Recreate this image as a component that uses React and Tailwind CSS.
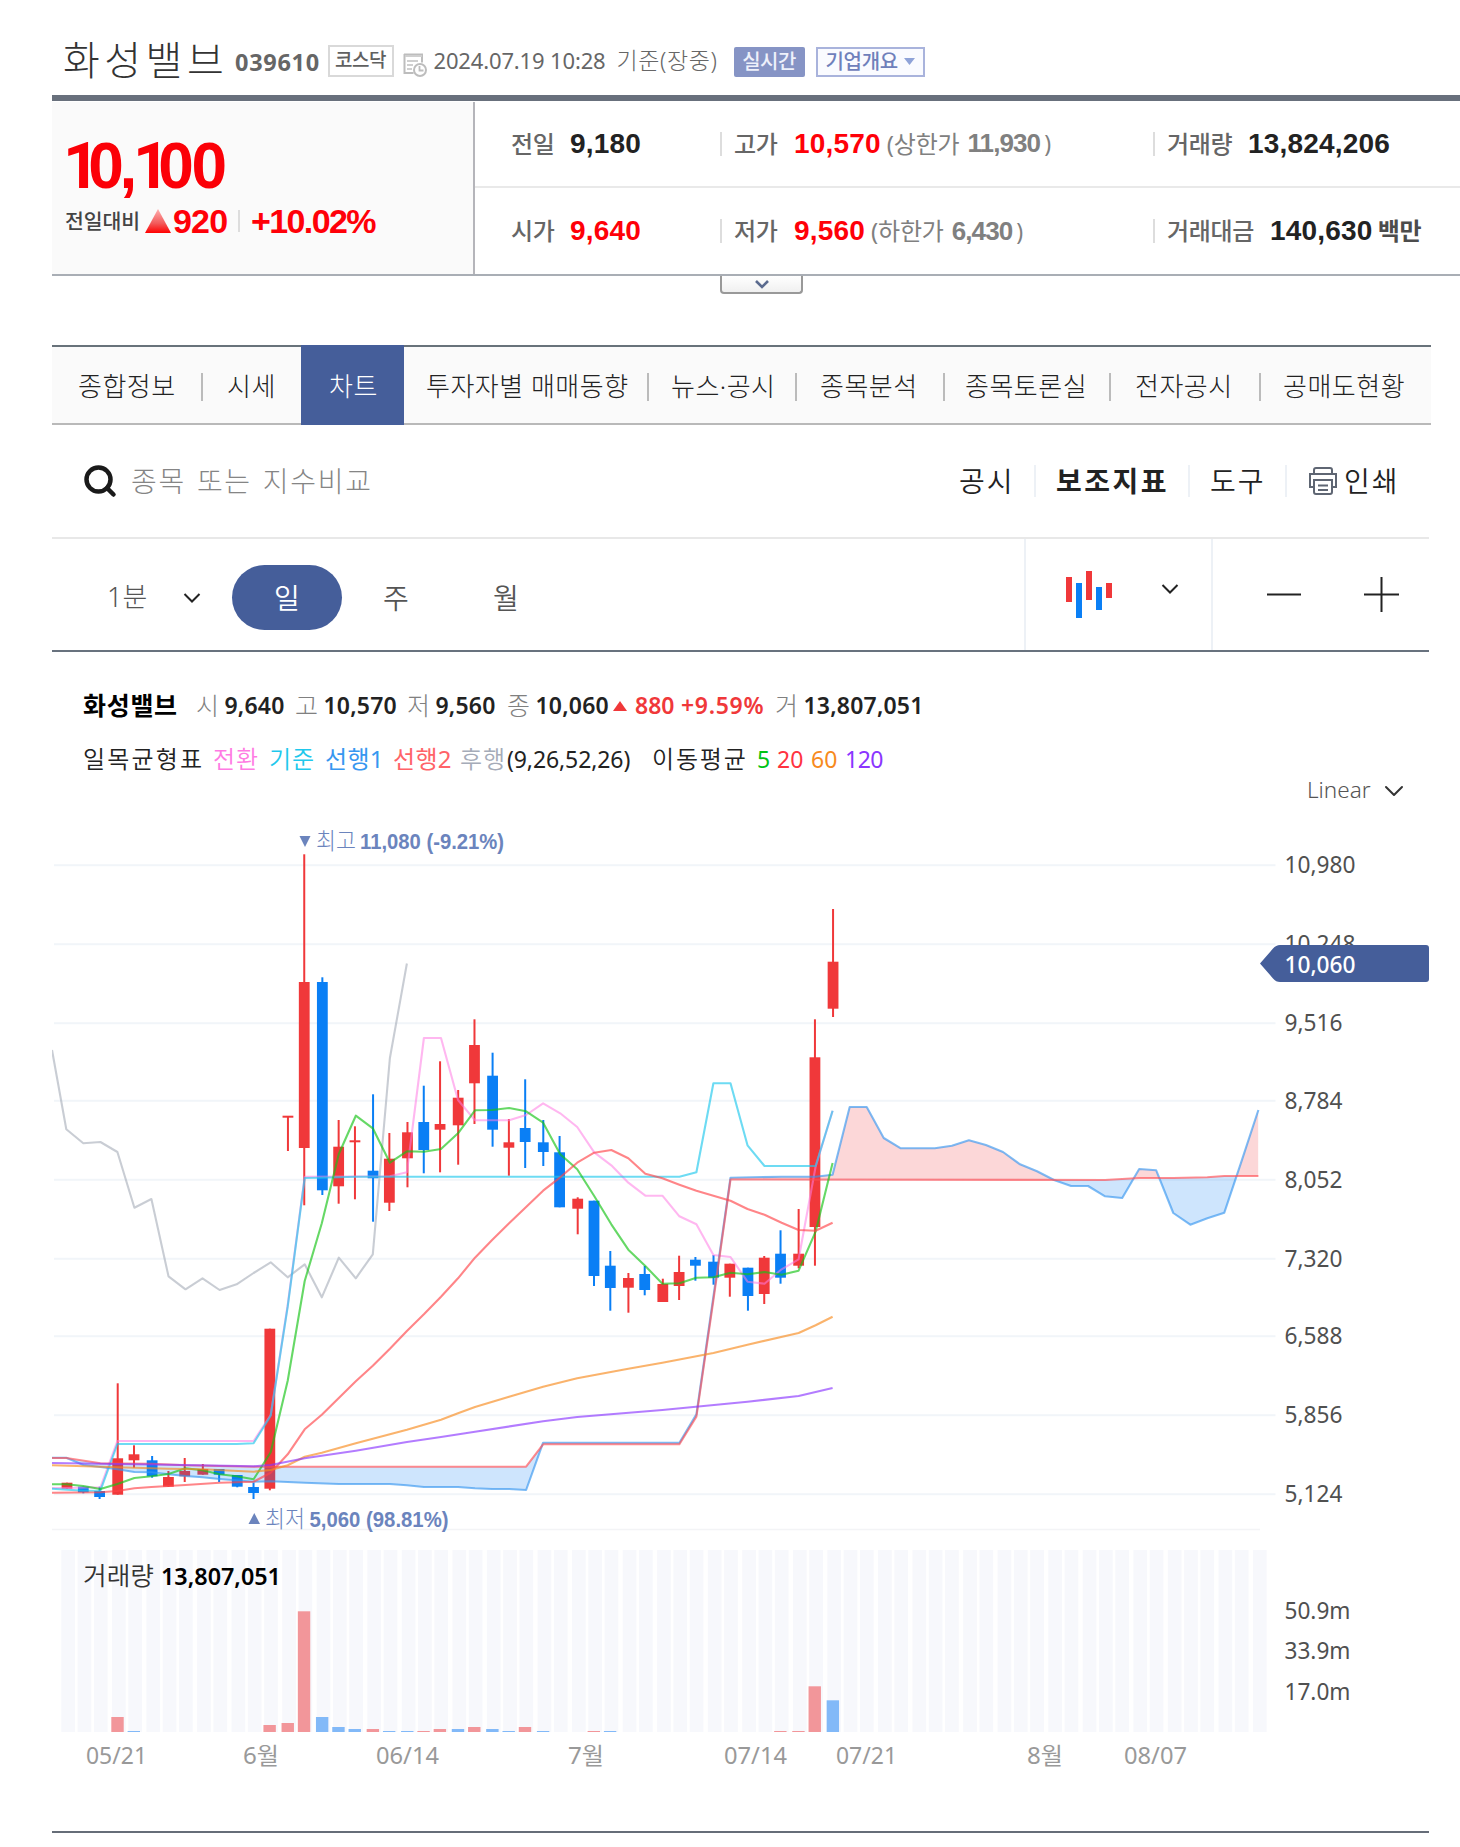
import React from "react";
import { ChevronDown, Search } from "lucide-react";

const RED = "#f0383a";
const BLUE = "#0a7ff5";

// [high, top, bottom, low, isUp]
const candles = [
  [1482.7, 1482.7, 1488.7, 1488.7, 1],
  [1486.7, 1486.7, 1492.3, 1493.3, 0],
  [1486.7, 1491, 1497, 1499, 0],
  [1383.3, 1458.3, 1494.7, 1494.7, 1],
  [1445.3, 1454.3, 1460.3, 1467.7, 1],
  [1456, 1460.3, 1476.3, 1477.7, 0],
  [1471, 1477, 1486.7, 1487, 1],
  [1458, 1471, 1476.3, 1482, 1],
  [1464, 1469, 1474.7, 1474.7, 1],
  [1469, 1469, 1474.7, 1482, 0],
  [1475, 1475, 1486.7, 1487.3, 0],
  [1482.7, 1487, 1493, 1499, 0],
  [1328.7, 1328.7, 1488.7, 1490.3, 1],
  [1116, 1115.7, 1117.7, 1151, 1],
  [854.3, 982, 1148, 1205.3, 1],
  [977.3, 982, 1190.3, 1195, 0],
  [1120, 1146.7, 1186.3, 1203.7, 1],
  [1126.3, 1140.3, 1142.3, 1199.3, 1],
  [1094.3, 1170.7, 1178.3, 1221.7, 0],
  [1133, 1158.7, 1202.7, 1211, 1],
  [1122, 1132.3, 1158.3, 1187.3, 1],
  [1085.7, 1122, 1150, 1173.3, 0],
  [1061.3, 1124, 1129.7, 1172.3, 1],
  [1090, 1097.7, 1125.3, 1164.7, 1],
  [1019.3, 1045, 1083.3, 1124, 1],
  [1052.7, 1075.7, 1129.7, 1146.7, 0],
  [1119, 1142.3, 1147.7, 1175.7, 1],
  [1079.3, 1128, 1142, 1168, 0],
  [1120, 1142.3, 1152, 1166, 0],
  [1136, 1152.3, 1207.3, 1207.3, 0],
  [1197.3, 1198.7, 1208.7, 1234.3, 1],
  [1200.7, 1200.7, 1276, 1286, 0],
  [1251, 1265.7, 1288, 1310.7, 0],
  [1273, 1278, 1287.7, 1312.7, 1],
  [1266, 1274, 1290, 1295.3, 0],
  [1278.7, 1284, 1302, 1302, 1],
  [1255.7, 1272, 1286, 1300, 1],
  [1257, 1259.7, 1265.7, 1280.7, 0],
  [1255, 1261.7, 1277.7, 1284.7, 0],
  [1263.7, 1263.7, 1277.7, 1296.7, 1],
  [1267.7, 1267.7, 1296, 1310.7, 0],
  [1256, 1257.7, 1294, 1304, 1],
  [1230.3, 1253.7, 1277.7, 1283.7, 0],
  [1209, 1253.7, 1265.7, 1268.3, 1],
  [1019.3, 1057.3, 1227, 1265.7, 1],
  [909, 961.7, 1008.7, 1017, 1],
];

// [day, y] points
const conversion = [[-0.84, 1488], [0, 1488], [2, 1487.3], [3, 1441], [11, 1441], [12, 1415], [13, 1305], [14, 1176.7], [19, 1176.3], [20, 1172.3], [21, 1038], [22, 1038], [23, 1100], [24, 1120.3], [26, 1120.3], [27, 1115], [28, 1103.3], [29, 1113.3], [30, 1127], [31, 1152.3], [32, 1165.3], [33, 1182.7], [34, 1195.7], [35, 1195.7], [36, 1216.3], [37, 1224.3], [38, 1255], [39, 1257], [40, 1281.7], [41, 1283.7], [42, 1269.3], [43, 1259.3], [44, 1166.7], [45, 1110.7]];
const base = [[-0.84, 1488.7], [1, 1490.7], [2, 1490.7], [3, 1444], [10, 1444], [11, 1443.3], [12, 1415.7], [13, 1306.7], [14, 1178], [15, 1177.7], [17, 1176.7], [36, 1176.7], [37, 1172.3], [38, 1083.3], [39, 1083.3], [40, 1145.3], [41, 1166], [44, 1166], [45, 1110.7]];
const lagging = [[-0.84, 1050], [0, 1129.3], [1, 1143.3], [2, 1142], [3, 1152], [4, 1207.7], [5, 1199], [6, 1276.3], [7, 1289.3], [8, 1278.3], [9, 1290], [10, 1284.3], [11, 1273], [12, 1262.3], [13, 1277.3], [14, 1264.3], [15, 1297.3], [16, 1257.7], [17, 1278.3], [18, 1254.3], [19, 1058], [20, 963.5]];
const spanA = [[-0.84, 1457.7], [0, 1457.7], [1, 1465], [2, 1467], [3, 1469.3], [4, 1472], [5, 1472.3], [6, 1474.3], [7, 1476], [8, 1477.3], [9, 1479], [11, 1481.7], [12, 1481.3], [14, 1482.7], [16, 1484], [19, 1484], [20, 1485.3], [21, 1487], [23, 1487], [24, 1488.3], [25, 1489], [26, 1489], [27, 1490], [28, 1442.7], [36, 1442.7], [37, 1414.3], [38, 1296.7], [39, 1177.7], [42, 1176.7], [44, 1176.7], [45, 1174.7], [46, 1107], [47, 1107], [48, 1138], [49, 1148.3], [51, 1148.3], [52, 1145.7], [53, 1140.3], [54, 1145], [55, 1152], [56, 1164.3], [57, 1171.3], [58, 1180], [59, 1186], [60, 1186], [61, 1196.3], [62, 1198], [63, 1169], [64, 1170.3], [65, 1213], [66, 1224.7], [67, 1218.3], [68, 1212.7], [69, 1161.7], [70, 1110]];
const spanB = [[-0.84, 1458], [0, 1458], [2, 1463.3], [5, 1463.7], [7, 1465.3], [11, 1466.7], [27, 1466.7], [28, 1444.3], [36, 1444.3], [37, 1416.7], [38, 1300], [39, 1179.5], [61, 1180], [63, 1178], [65, 1178], [67, 1177.3], [68, 1176], [70, 1176]];
const ma5 = [[-0.84, 1484.3], [0, 1484.3], [1, 1486], [2, 1489], [3, 1484], [4, 1478], [5, 1476.3], [6, 1474], [7, 1468.3], [8, 1470.3], [9, 1474.3], [10, 1476.3], [11, 1479.3], [12, 1452.3], [13, 1380.7], [14, 1281], [15, 1223.3], [16, 1154], [17, 1115.7], [18, 1128.3], [19, 1162.7], [20, 1151.3], [21, 1151.7], [22, 1149], [23, 1133.3], [24, 1110.3], [25, 1110], [26, 1108], [27, 1111.3], [28, 1122.7], [29, 1154.3], [30, 1169.3], [31, 1196], [32, 1224.3], [33, 1249.7], [34, 1266], [35, 1283.7], [36, 1283.3], [37, 1277.7], [38, 1277.3], [39, 1272.7], [40, 1274.3], [41, 1272], [42, 1274.7], [43, 1270.7], [44, 1231.7], [45, 1163]];
const ma20 = [[-0.84, 1492.7], [2, 1492.3], [3, 1491], [4, 1488.3], [5, 1487], [7, 1485], [9, 1482.7], [11, 1481.7], [12, 1472.7], [13, 1454.3], [14, 1429.3], [15, 1414.7], [16, 1398], [17, 1381.3], [18, 1365.7], [19, 1348.7], [20, 1331], [21, 1314.3], [22, 1296.7], [23, 1278.3], [24, 1257.7], [25, 1240], [26, 1223.3], [27, 1207], [28, 1190.7], [29, 1177.3], [30, 1162.7], [31, 1152.7], [32, 1150], [33, 1158.3], [34, 1173.7], [35, 1178.3], [36, 1184.7], [37, 1190.7], [38, 1195.7], [39, 1200.7], [40, 1209], [41, 1214.7], [42, 1222.7], [43, 1230], [44, 1230.7], [45, 1222.7]];
const ma60 = [[-0.84, 1465.3], [3, 1467.3], [6, 1468.7], [8, 1469.3], [11, 1471.7], [12, 1470], [13, 1465.3], [14, 1456.7], [15, 1452.7], [17, 1443.3], [20, 1429.7], [22, 1419.7], [23, 1413.3], [24, 1407], [26, 1396.7], [28, 1386.7], [30, 1378.3], [33, 1368.7], [35, 1362.7], [38, 1353], [40, 1344.7], [43, 1333], [44, 1325.3], [45, 1316.7]];
const ma120 = [[-0.84, 1463], [3, 1464], [7, 1465], [11, 1466.3], [12, 1465], [14, 1458.3], [17, 1450.7], [20, 1442], [22, 1437], [24, 1431.7], [28, 1421.3], [30, 1417], [35, 1410], [40, 1401.7], [43, 1396], [45, 1388]];

// [day, top, isUp]
const volumes = [
  [3, 1717, 1], [4, 1731, 0], [12, 1725, 1], [13, 1723, 1], [14, 1611.3, 1], [15, 1717, 0],
  [16, 1727, 0], [17, 1729, 0], [18, 1729, 1], [19, 1731, 0], [20, 1731, 0], [21, 1731, 1],
  [22, 1729, 1], [23, 1729, 0], [24, 1727, 1], [25, 1729, 0], [26, 1731, 0], [27, 1727, 1],
  [28, 1731, 0], [31, 1731, 1], [32, 1731, 0], [42, 1731, 1], [43, 1731, 1], [44, 1686.3, 1], [45, 1700.3, 0],
];

const prices = [
  [865, "10,980", 71], [944, "10,248", 71], [1023, "9,516", 58], [1100.5, "8,784", 58], [1179.5, "8,052", 58],
  [1258.5, "7,320", 58], [1336, "6,588", 58], [1415, "5,856", 58], [1494, "5,124", 58],
];

const dates = [
  [86, "05/21", 61], [243, "6월", 36], [376, "06/14", 63], [568, "7월", 36],
  [724, "07/14", 63], [836, "07/21", 61], [1027, "8월", 36], [1124, "08/07", 63],
];

const barX = (i) => 67 + 1.811 * Math.floor(9.4 * i + 0.001);
const lineX = (i) => 66.3 + 17.03 * i;
const toPoints = (pts) => pts.map(([i, y]) => `${lineX(i).toFixed(1)},${y}`).join(" ");

const Line = ({ pts, color, opacity = 0.65 }) => (
  <polyline points={toPoints(pts)} fill="none" stroke={color} strokeOpacity={opacity} strokeWidth="2.1" strokeLinejoin="round" />
);

const Label = ({ x, y, w, children, ...rest }) => (
  <text x={x} y={y} textLength={w} lengthAdjust="spacingAndGlyphs" {...rest}>
    {children}
  </text>
);

const Chart = () => {
  const cloud = toPoints(spanA) + " " + toPoints([...spanB].reverse());
  const edge = toPoints(spanB);

  return (
    <svg viewBox="52 820 1408 960" className="ml-[52px] block h-[960px] w-[1408px] text-[23px]">
      <defs>
        <clipPath id="above"><polygon points={`52,820 ${edge} 1259,820`} /></clipPath>
        <clipPath id="below"><polygon points={`52,1540 ${edge} 1259,1540`} /></clipPath>
      </defs>

      {/* Grid */}
      {prices.map(([y]) => (
        <line key={y} x1="54" x2="1275.5" y1={y + 0.3} y2={y + 0.3} stroke="#f1f5f9" strokeWidth="2" />
      ))}
      <line x1="52" x2="1260" y1="1529.5" y2="1529.5" stroke="#f3f4f6" strokeWidth="1.5" />

      {/* Candles */}
      {candles.map(([high, top, bottom, low, up], i) => (
        <g key={i} fill={up ? RED : BLUE}>
          <rect x={barX(i) - 1} y={high} width="2" height={low - high} />
          <rect x={barX(i) - 5.4} y={top} width="10.8" height={bottom - top} />
        </g>
      ))}

      {/* Cloud */}
      <polygon points={cloud} fill={RED} fillOpacity="0.2" clipPath="url(#above)" />
      <polygon points={cloud} fill={BLUE} fillOpacity="0.2" clipPath="url(#below)" />
      <Line pts={lagging} color="#a5abb8" opacity={0.6} />
      <Line pts={conversion} color="#ff7be3" opacity={0.55} />
      <Line pts={base} color="#1fc8ec" />
      <Line pts={spanA} color="#3797f0" />
      <Line pts={spanB} color="#ff4f54" />
      <Line pts={ma5} color="#14c314" />
      <Line pts={ma20} color="#ff4448" />
      <Line pts={ma60} color="#f78a1d" />
      <Line pts={ma120} color="#8b35ff" />

      {/* High / low markers */}
      <g fill="#6b84bd">
        <path d="M299.5 836h11l-5.5 11z" />
        <Label x="316" y="848.500" w="40" className="font-light">최고</Label>
        <Label x="360" y="849" w="144" className="font-bold text-[22px] font-['Liberation_Sans',sans-serif]">11,080 (-9.21%)</Label>
        <path d="M248.500 1524h11.500l-5.700-11z" />
        <Label x="265" y="1526.500" w="40" className="font-light">최저</Label>
        <Label x="309.500" y="1526.500" w="139" className="font-bold text-[22px] font-['Liberation_Sans',sans-serif]">5,060 (98.81%)</Label>
      </g>

      {/* Price axis */}
      {prices.map(([y, text, w]) => (
        <Label key={text} x="1284.500" y={y + 8} w={w} fill="#505050">{text}</Label>
      ))}
      <path d="M1260 963.500l13-15q3-3.500 7-3.500h146q3 0 3 3v31q0 3-3 3h-146q-4 0-7-3.500z" fill="#455e9a" />
      <Label x="1284.500" y="973" w="71" fill="#fff" className="font-medium">10,060</Label>

      {/* Volume */}
      {Array.from({ length: 71 }, (_, i) => (
        <rect key={i} x={barX(i) - 5.7} y="1550" width="13.700" height="182" fill="#f7f8fc" />
      ))}
      {volumes.map(([i, y, up]) => (
        <rect key={i} x={barX(i) - 6.4} y={y} width="12.400" height={1732 - y} fill={up ? "#f2969a" : "#82b9f8"} />
      ))}
      <Label x="83" y="1585" w="71" fill="#333" className="font-[350] text-[25px]">거래량</Label>
      <Label x="161" y="1584.500" w="120" fill="#000" className="font-semibold">13,807,051</Label>
      {[[1618.5, "50.9m"], [1659, "33.9m"], [1700, "17.0m"]].map(([y, text]) => (
        <Label key={text} x="1284.500" y={y} w="66" fill="#505050">{text}</Label>
      ))}

      {/* Dates */}
      {dates.map(([x, text, w]) => (
        <Label key={text} x={x} y="1764" w={w} fill="#999">{text}</Label>
      ))}
    </svg>
  );
};

const Header = () => (
  <header className="flex h-[95px] pl-[63px] whitespace-nowrap">
    <h1 className="w-[172px] pt-[32px] text-[40px] leading-[56px] font-light tracking-[4.500px] text-[#333]">화성밸브</h1>
    <span className="w-[92.500px] pt-[47px] text-[23.500px] leading-[30px] font-bold tracking-[0.700px] text-[#666]">039610</span>
    <span className="mt-[45px] flex h-[32px] w-[66px] items-center justify-center border-2 border-[#d9d9d9] pb-px text-[19px] font-medium tracking-[-0.500px] text-[#606060]">코스닥</span>
    <svg viewBox="0 0 24 24" className="mt-[53px] ml-[9px] size-6" fill="none" stroke="#bdbdbd">
      <path d="M1 1.500h18v8M1.500 1v19h9" strokeWidth="2" />
      <path d="M2 3h17M4 8h11M4 12h6M4 16h5" strokeWidth="2.200" stroke="#cfcfcf" />
      <circle cx="17" cy="17" r="6" fill="#fff" strokeWidth="2" />
      <path d="M16.500 13v4.500h4" strokeWidth="1.800" />
    </svg>
    <span className="ml-[7px] w-[183px] pt-[45px] text-[22px] leading-[30px] tracking-[-0.150px] text-[#666]">2024.07.19 10:28</span>
    <span className="w-[117px] pt-[45px] text-[23px] leading-[30px] font-light tracking-[0.600px] text-[#666]">기준(장중)</span>
    <span className="mt-[47px] flex h-[30px] w-[71px] items-center justify-center rounded-[2px] bg-[#8694c5] pb-px text-[20px] font-medium tracking-[-0.500px] text-[#eef1fb]">실시간</span>
    <span className="mt-[47px] ml-[11px] flex h-[30px] w-[109px] items-center border-2 border-[#a9b3dc] bg-[#fafbff] pb-px pl-[8px] text-[20px] font-medium tracking-[-0.300px] text-[#6f80bb]">
      기업개요
      <svg viewBox="0 0 11 7" className="ml-[6px] h-[7px] w-[11px]"><path d="M0 0h11l-5.500 7z" fill="#8fa3d8" /></svg>
    </span>
  </header>
);

const Quote = ({ label, value, width, up, limit, limitValue, unit }) => (
  <div className="flex h-6 items-center whitespace-nowrap">
    <span className={`${width} text-[24px] font-medium tracking-[-0.300px] text-[#666]`}>{label}</span>
    <span className={`font-['Liberation_Sans',sans-serif] text-[28px] font-bold tracking-[0.200px] ${up ? "text-[#ff0008]" : "text-[#222]"}`}>{value}</span>
    {limit && (
      <span className="ml-[6px] flex items-center text-[#808080]">
        <span className="text-[24px] tracking-[-0.200px]">({limit}</span>
        <span className="ml-[8px] font-['Liberation_Sans',sans-serif] text-[26px] font-bold tracking-[-0.900px]">{limitValue}</span>
        <span className="ml-[4px] text-[23px]">)</span>
      </span>
    )}
    {unit && <span className="ml-[5px] text-[24px] font-bold tracking-[-0.300px] text-[#4c4c4c]">{unit}</span>}
  </div>
);

const One = () => <span className="font-['Roboto',sans-serif] tracking-[-11.500px]">1</span>;

const Summary = () => (
  <section className="ml-[52px] flex h-[181px] border-t-[6px] border-b-2 border-t-[#68707c] border-b-[#a9aeb5]">
    <div className="mt-px w-[423px] border-r-2 border-[#b5b5ba] bg-[#fafafa] pl-[12px] whitespace-nowrap">
      <div className="-ml-px h-[102px] pt-[29px] font-['Liberation_Sans',sans-serif] text-[64px] leading-[70px] font-bold tracking-[-2.300px] text-[#fb0007]">
        <One />
        <span className="tracking-[-4.300px]">0,</span>
        <One />
        00
      </div>
      <div className="flex h-[34px] items-center">
        <span className="w-[81px] pl-px text-[20.500px] font-medium tracking-[-0.100px] text-[#444]">전일대비</span>
        <svg viewBox="0 0 26 24" className="h-6 w-[26px]">
          <defs>
            <linearGradient id="up" x1="0" y1="0" x2="0" y2="1">
              <stop offset="0" stopColor="#ffb0b0" />
              <stop offset="0.600" stopColor="#f25a5a" />
              <stop offset="1" stopColor="#f00" />
            </linearGradient>
          </defs>
          <path d="M13 0l13 24H0z" fill="url(#up)" />
        </svg>
        <span className="ml-[2px] w-[65px] font-['Liberation_Sans',sans-serif] text-[34px] font-bold tracking-[-0.800px] text-[#ff0008]">920</span>
        <span className="h-[22px] w-0.5 bg-[#ddd]" />
        <span className="ml-[11px] font-['Liberation_Sans',sans-serif] text-[34px] font-bold tracking-[-1.600px] text-[#ff0008]">+10.02%</span>
      </div>
    </div>
    <div className="flex-1">
      <div className="flex h-[87px] items-center border-b-2 border-[#e9e9e9]">
        <div className="w-[245px] pl-[36px]"><Quote label="전일" value="9,180" width="w-[59px]" /></div>
        <div className="w-[433px] border-l-2 border-[#ddd] pl-[12px]"><Quote label="고가" value="10,570" width="w-[60px]" up limit="상한가" limitValue="11,930" /></div>
        <div className="border-l-2 border-[#ddd] pl-[12px]"><Quote label="거래량" value="13,824,206" width="w-[81px]" /></div>
      </div>
      <div className="flex h-[86px] items-center">
        <div className="w-[245px] pl-[36px]"><Quote label="시가" value="9,640" width="w-[59px]" up /></div>
        <div className="w-[433px] border-l-2 border-[#ddd] pl-[12px]"><Quote label="저가" value="9,560" width="w-[60px]" up limit="하한가" limitValue="6,430" /></div>
        <div className="border-l-2 border-[#ddd] pl-[12px]"><Quote label="거래대금" value="140,630" width="w-[103px]" unit="백만" /></div>
      </div>
    </div>
  </section>
);

const tabs = [
  ["종합정보", "w-[149px] pl-[26px]", false],
  ["시세", "w-[100px] pl-[26px]", true],
  ["차트", "w-[103px] pl-[28px]", false],
  ["투자자별 매매동향", "w-[243px] pl-[22px]", false],
  ["뉴스·공시", "w-[148px] pl-[24px]", true],
  ["종목분석", "w-[148px] pl-[25px]", true],
  ["종목토론실", "w-[166px] pl-[22px]", true],
  ["전자공시", "w-[150px] pl-[26px]", true],
  ["공매도현황", "w-[172px] pl-[24px]", true],
];

const Tabs = () => (
  <nav className="mt-[51px] ml-[52px] flex h-[80px] w-[1379px] bg-[#fafafa] text-[26px] leading-[78px] font-light tracking-[0.500px] whitespace-nowrap text-[#222]">
    {tabs.map(([name, size, sep]) =>
      name === "차트" ? (
        <a key={name} className={`${size} bg-[#455e9a] pt-[2px] text-white`}>{name}</a>
      ) : (
        <a key={name} className={`${size} relative h-[80px] border-t-2 border-b-2 border-t-[#68727a] border-b-[#b9b9b9]`}>
          {sep && <i className="absolute top-[26px] left-0 h-[28px] w-0.5 bg-[#bbb]" />}
          {name}
        </a>
      )
    )}
  </nav>
);

const Divider = () => <i className="h-8 w-0.5 bg-[#edf1f6]" />;

const SearchRow = () => (
  <div className="ml-[52px] flex h-[114px] w-[1377px] items-center border-b-2 border-[#e8e8e8] whitespace-nowrap text-[28px] font-[350] text-[#222]">
    <Search className="ml-[30px] size-[36px] text-[#1a1a1a]" strokeWidth={3} />
    <span className="ml-[13px] flex-1 font-light tracking-[1.700px] [word-spacing:2px] text-[#858585]">종목 또는 지수비교</span>
    <span className="w-[75px] tracking-[2px]">공시</span>
    <Divider />
    <span className="w-[152px] pl-[20px] font-bold tracking-[2.500px]">보조지표</span>
    <Divider />
    <span className="w-[95px] pl-[20px] tracking-[2px]">도구</span>
    <Divider />
    <svg viewBox="0 0 28 28" className="ml-[22px] size-7" fill="none" stroke="#5f6673" strokeWidth="2">
      <path d="M5 7V3q0-2 2-2h14q2 0 2 2v4M5 20H1V7h26v13h-4M5 13h18v12q0 2-2 2H7q-2 0-2-2zM9 18.500h10M9 23h10" />
    </svg>
    <span className="ml-[7px] w-[85px] tracking-[2px]">인쇄</span>
  </div>
);

const IntervalRow = () => (
  <div className="ml-[52px] flex h-[113px] w-[1377px] border-b-2 border-[#68727e] text-[28px] font-[350] text-[#555]">
    <div className="flex flex-1 items-center pt-[6px]">
      <span className="ml-[55px] w-[76px] text-[27px] font-light">1분</span>
      <svg viewBox="0 0 18 12" className="h-3 w-[18px]" fill="none" stroke="#222" strokeWidth="2"><path d="M1.500 2L9 9.500 16.500 2" /></svg>
      <span className="ml-[31px] flex h-[65px] w-[110px] items-center justify-center rounded-full bg-[#455e9a] text-white">일</span>
      <span className="ml-[41px] w-[110px]">주</span>
      <span>월</span>
    </div>
    <div className="flex w-[187px] border-l-2 border-[#edf1f6]">
      <svg viewBox="0 0 46 48" className="mt-[32px] ml-[40px] h-12 w-[46px]">
        <path d="M0 6h6v25H0zM20 0h6v29h-6zM40 12h6v15h-6z" fill={RED} />
        <path d="M10 12h6v35h-6zM30 16h6v23h-6z" fill={BLUE} />
      </svg>
      <svg viewBox="0 0 18 12" className="mt-[44px] ml-[49px] h-3 w-[18px]" fill="none" stroke="#222" strokeWidth="2"><path d="M1.500 2L9 9.500 16.500 2" /></svg>
    </div>
    <div className="flex w-[218px] border-l-2 border-[#edf1f6]">
      <svg viewBox="0 0 134 36" className="mt-[37px] ml-[54px] h-9 w-[134px]" stroke="#222" strokeWidth="2">
        <path d="M0 18.500h34M97 18.500h35M114.500 1v35" />
      </svg>
    </div>
  </div>
);

const Ohlc = ({ label, value, width }) => (
  <span className={`${width} flex`}>
    <span className="w-[28.500px] text-[25px] font-light text-[#808080]">{label}</span>
    <b className="font-semibold tracking-[0.200px] text-[#222]">{value}</b>
  </span>
);

const Legend = () => (
  <div className="h-[168px] pl-[83px] whitespace-nowrap">
    <div className="flex pt-[35px] text-[23px] leading-[36px]">
      <b className="w-[113px] text-[25px] font-bold tracking-[0.700px] text-black">화성밸브</b>
      <Ohlc label="시" value="9,640" width="w-[99px]" />
      <Ohlc label="고" value="10,570" width="w-[112px]" />
      <Ohlc label="저" value="9,560" width="w-[100px]" />
      <Ohlc label="종" value="10,060" width="w-[106px]" />
      <svg viewBox="0 0 14 10" className="mt-[14px] h-[10px] w-[14px]"><path d="M7 0l7 10H0z" fill={RED} /></svg>
      <b className="ml-[8px] w-[46px] font-semibold text-[#f0383a]">880</b>
      <b className="w-[94px] font-semibold tracking-[0.700px] text-[#f0383a]">+9.59%</b>
      <Ohlc label="거" value="13,807,051" width="w-[150px]" />
    </div>
    <div className="flex pt-[19px] text-[24px] leading-[34px] font-[350] tracking-[1px] text-[#222]">
      <span className="w-[130px] tracking-[2.200px]">일목균형표</span>
      <span className="w-[56px] text-[#ff7be3]">전환</span>
      <span className="w-[56px] text-[#1fc8ec]">기준</span>
      <span className="w-[68px] font-normal tracking-[0.300px] text-[#3797f0]">선행1</span>
      <span className="w-[67px] font-normal tracking-[0.300px] text-[#ff6368]">선행2</span>
      <span className="w-[47px] text-[#a5abb8]">후행</span>
      <span className="w-[145px] text-[23px] font-normal tracking-[-0.100px]">(9,26,52,26)</span>
      <span className="w-[105px] tracking-[1.800px]">이동평균</span>
      <span className="w-[20px] text-[23px] font-normal tracking-normal text-[#00c314]">5</span>
      <span className="w-[34px] text-[23px] font-normal tracking-normal text-[#ff333f]">20</span>
      <span className="w-[34px] text-[23px] font-normal tracking-normal text-[#f78a1d]">60</span>
      <span className="text-[23px] font-normal tracking-[-0.500px] text-[#8b35ff]">120</span>
    </div>
    <div className="-mt-[4.500px] ml-[1224px] flex items-center text-[22.500px] leading-[36px] text-[#555]">
      <span className="w-[71px] font-light">Linear</span>
      <ChevronDown className="mt-[3px] size-8 text-[#333]" strokeWidth={1.5} />
    </div>
  </div>
);

export default function App() {
  return (
    <div className="h-[1847px] w-[1460px] overflow-hidden bg-white font-['Noto_Sans','Noto_Sans_CJK_KR',sans-serif]">
      <Header />
      <Summary />
      <div className="relative">
        <div className="absolute top-0 left-[720px] flex h-[18px] w-[83px] justify-center rounded-b-[4px] border-2 border-t-0 border-[#999] bg-gradient-to-b from-white to-[#f0f0f0]">
          <svg viewBox="0 0 14 9" className="mt-[4px] h-[9px] w-[14px]" fill="none" stroke="#5b6b8f" strokeWidth="2.600"><path d="M1 1l6 6 6-6" /></svg>
        </div>
      </div>
      <div className="pt-[18px]">
        <Tabs />
      </div>
      <SearchRow />
      <IntervalRow />
      <Legend />
      <Chart />
      <div className="mt-[51px] ml-[52px] h-0.5 w-[1377px] bg-[#666d78]" />
    </div>
  );
}
